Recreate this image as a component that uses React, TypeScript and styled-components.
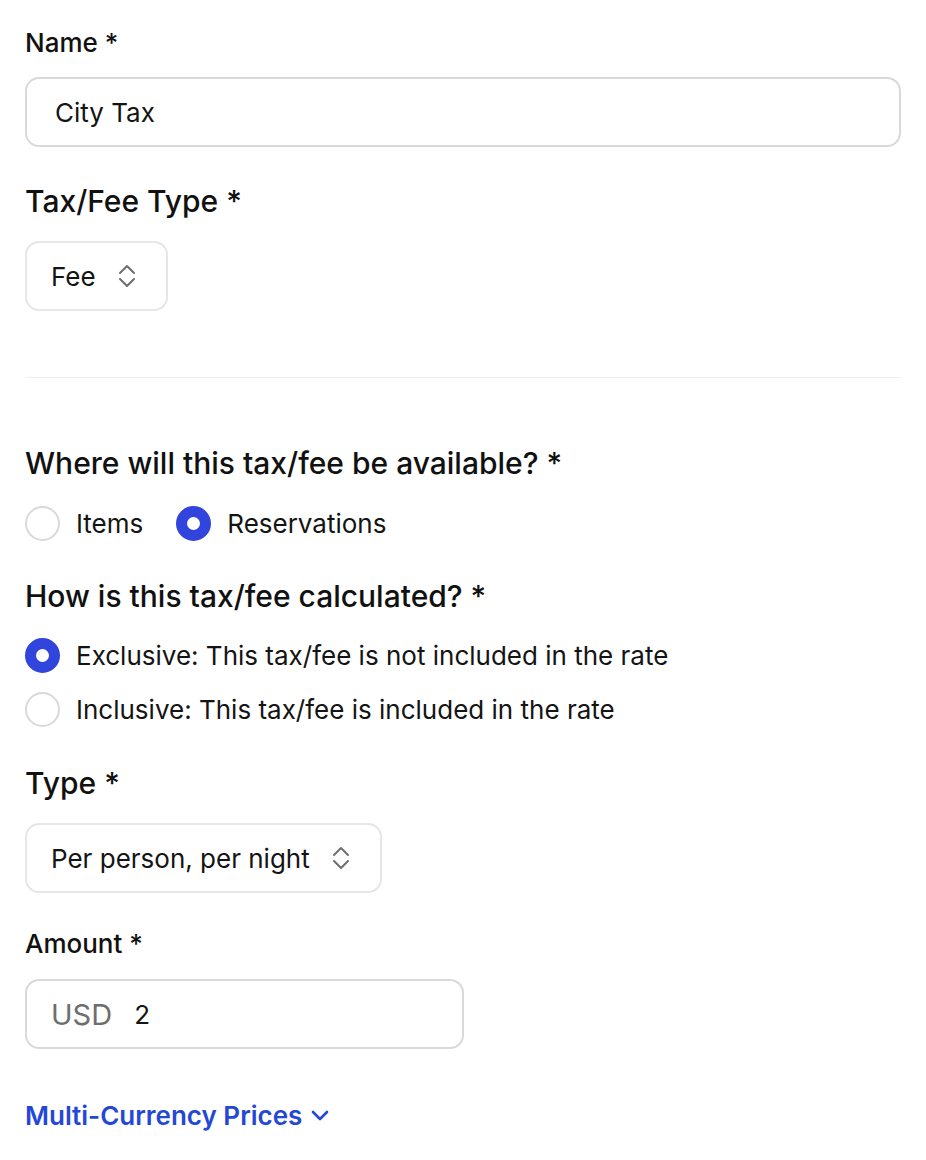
import styled, { createGlobalStyle } from "styled-components";

const GlobalStyle = createGlobalStyle`
  body {
    margin: 0;
    background: #ffffff;
    font-family: Inter, "Noto Sans", "Liberation Sans", sans-serif;
    color: #141414;
  }
`;

const Form = styled.div`
  width: 926px;
  box-sizing: border-box;
  padding: 25px 25px 40px;
  display: flex;
  flex-direction: column;
`;

const Label = styled.div<{ big?: boolean }>`
  font-size: ${(p) => (p.big ? "30px" : "26px")};
  line-height: ${(p) => (p.big ? "40px" : "36px")};
  font-weight: 500;
  color: #111111;
`;

const Field = styled.div<{ gap: number; after: number }>`
  display: flex;
  flex-direction: column;
  gap: ${(p) => p.gap}px;
  margin-bottom: ${(p) => p.after}px;
`;

const TextBox = styled.div<{ width?: number; inset?: number }>`
  box-sizing: border-box;
  height: 70px;
  width: ${(p) => (p.width ? `${p.width}px` : "100%")};
  border: 2px solid #d9d9d9;
  border-radius: 14px;
  display: flex;
  align-items: center;
  padding-left: ${(p) => p.inset ?? 28}px;
  font-size: 26px;
  color: #141414;
`;

const Prefix = styled.span`
  font-size: 29px;
  color: #6e6e6e;
  margin-right: 22px;
`;

const Select = styled.div`
  box-sizing: border-box;
  align-self: flex-start;
  height: 70px;
  border: 2px solid #e6e6e6;
  border-radius: 14px;
  display: flex;
  align-items: center;
  gap: 22px;
  padding: 0 30px 0 24px;
  font-size: 26px;
  color: #141414;
`;

const Divider = styled.hr`
  border: none;
  height: 1px;
  background: #f0f0f0;
  margin: 0 0 65px;
`;

const RadioRow = styled.div<{ column?: boolean }>`
  display: flex;
  flex-direction: ${(p) => (p.column ? "column" : "row")};
  gap: ${(p) => (p.column ? "14px" : "33px")};
`;

const Option = styled.label`
  display: flex;
  align-items: center;
  gap: 16px;
  height: 40px;
  font-size: 26px;
  color: #141414;
`;

const Dot = styled.span<{ checked?: boolean }>`
  box-sizing: border-box;
  width: 35px;
  height: 35px;
  border-radius: 50%;
  border: ${(p) => (p.checked ? "11px solid #3144dc" : "2px solid #d9d9d9")};
  background: #ffffff;
  flex-shrink: 0;
`;

const Link = styled.div`
  display: flex;
  align-items: center;
  gap: 9px;
  font-size: 26px;
  line-height: 36px;
  font-weight: 600;
  color: #2448d6;
`;

function UpDown() {
  return (
    <svg width="18" height="26" viewBox="0 0 18 26" fill="none">
      <path d="M2 10 L9 3 L16 10" stroke="#6e6e6e" strokeWidth="2" strokeLinecap="round" strokeLinejoin="round" />
      <path d="M2 16 L9 23 L16 16" stroke="#6e6e6e" strokeWidth="2" strokeLinecap="round" strokeLinejoin="round" />
    </svg>
  );
}

function ChevronDown() {
  return (
    <svg width="18" height="12" viewBox="0 0 18 12" fill="none">
      <path d="M2 2 L9 9 L16 2" stroke="#2448d6" strokeWidth="2.6" strokeLinecap="round" strokeLinejoin="round" />
    </svg>
  );
}

export default function App() {
  return (
    <>
      <GlobalStyle />
      <Form>
        <Field gap={16} after={34}>
          <Label>Name *</Label>
          <TextBox>City Tax</TextBox>
        </Field>
        <Field gap={20} after={66}>
          <Label big>Tax/Fee Type *</Label>
          <Select>
            Fee
            <UpDown />
          </Select>
        </Field>
        <Divider />
        <Field gap={20} after={33}>
          <Label big>Where will this tax/fee be available? *</Label>
          <RadioRow>
            <Option>
              <Dot />
              Items
            </Option>
            <Option>
              <Dot checked />
              Reservations
            </Option>
          </RadioRow>
        </Field>
        <Field gap={19} after={34}>
          <Label big>How is this tax/fee calculated? *</Label>
          <RadioRow column>
            <Option>
              <Dot checked />
              Exclusive: This tax/fee is not included in the rate
            </Option>
            <Option>
              <Dot />
              Inclusive: This tax/fee is included in the rate
            </Option>
          </RadioRow>
        </Field>
        <Field gap={20} after={33}>
          <Label big>Type *</Label>
          <Select>
            Per person, per night
            <UpDown />
          </Select>
        </Field>
        <Field gap={17} after={49}>
          <Label>Amount *</Label>
          <TextBox width={439} inset={24}>
            <Prefix>USD</Prefix>2
          </TextBox>
        </Field>
        <Link>
          Multi-Currency Prices
          <ChevronDown />
        </Link>
      </Form>
    </>
  );
}
